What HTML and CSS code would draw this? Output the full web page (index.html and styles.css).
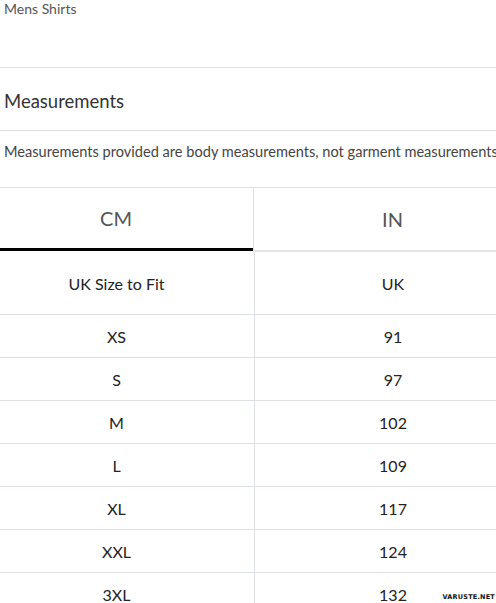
FILE: index.html
```html
<!DOCTYPE html>
<html>
<head>
<meta charset="utf-8">
<link rel="stylesheet" href="styles.css">
</head>
<body>
<div class="page">
  <div class="crumb">Mens Shirts</div>
  <div class="heading">Measurements</div>
  <div class="note">Measurements provided are body measurements, not garment measurements</div>
  <div class="table">
    <div class="tabs">
      <div class="tab active">CM</div>
      <div class="tab">IN</div>
    </div>
    <div class="grid">
      <div class="cell first">UK Size to Fit</div><div class="cell first right">UK</div>
      <div class="cell">XS</div><div class="cell right">91</div>
      <div class="cell">S</div><div class="cell right">97</div>
      <div class="cell">M</div><div class="cell right">102</div>
      <div class="cell">L</div><div class="cell right">109</div>
      <div class="cell">XL</div><div class="cell right">117</div>
      <div class="cell">XXL</div><div class="cell right">124</div>
      <div class="cell">3XL</div><div class="cell right">132</div>
    </div>
  </div>
  <div class="mark">VARUSTE.NET</div>
</div>
</body>
</html>
```
FILE: styles.css
```css
html, body {
  margin: 0;
  padding: 0;
  background: #fff;
}
body {
  font-family: "Lato", "Noto Sans", sans-serif;
  color: #222;
  width: 496px;
  height: 603px;
  overflow: hidden;
}
.page {
  position: relative;
  height: 603px;
  overflow: hidden;
}
.crumb {
  font-size: 14px;
  line-height: 18px;
  color: #555;
  padding: 0 4px;
  box-sizing: border-box;
  border-bottom: 1px solid #e0e0e0;
  height: 68px;
}
.heading {
  font-size: 18.5px;
  color: #333;
  padding: 2px 4px 0;
  height: 63px;
  line-height: 62px;
  box-sizing: border-box;
  border-bottom: 1px solid #e0e0e0;
}
.note {
  font-size: 14.6px;
  color: #444;
  padding: 0 0 0 4px;
  height: 57px;
  box-sizing: border-box;
  border-bottom: 1px solid #e0e0e0;
  line-height: 41px;
  white-space: nowrap;
  overflow: hidden;
}
.table {
  width: 552px;
  margin-left: -21px;
}
.tabs {
  display: grid;
  grid-template-columns: 274px 1fr;
  align-items: start;
}
.tab {
  height: 64px;
  box-sizing: border-box;
  display: flex;
  align-items: center;
  justify-content: center;
  font-size: 20px;
  color: #555;
  border-left: 1px solid #e0e0e0;
  border-bottom: 2px solid #e2e4e8;
  padding-top: 2px;
  padding-bottom: 2px;
}
.tab.active {
  height: 63px;
  border-left: none;
  border-bottom: 3px solid #000;
  padding-top: 1px;
}
.grid {
  display: grid;
  grid-template-columns: 275px 1fr;
}
.cell {
  height: 43px;
  box-sizing: border-box;
  border-bottom: 1px solid #dde0e6;
  display: flex;
  align-items: center;
  justify-content: center;
  font-size: 16px;
  color: #222;
}
.cell.first {
  height: 63px;
}
.cell.right {
  border-left: 1px solid #dde0e6;
}
.mark {
  position: absolute;
  right: 1px;
  bottom: 2px;
  font-family: "DejaVu Sans", sans-serif;
  font-weight: bold;
  font-size: 6.5px;
  letter-spacing: 0.2px;
  color: #111;
}
```
